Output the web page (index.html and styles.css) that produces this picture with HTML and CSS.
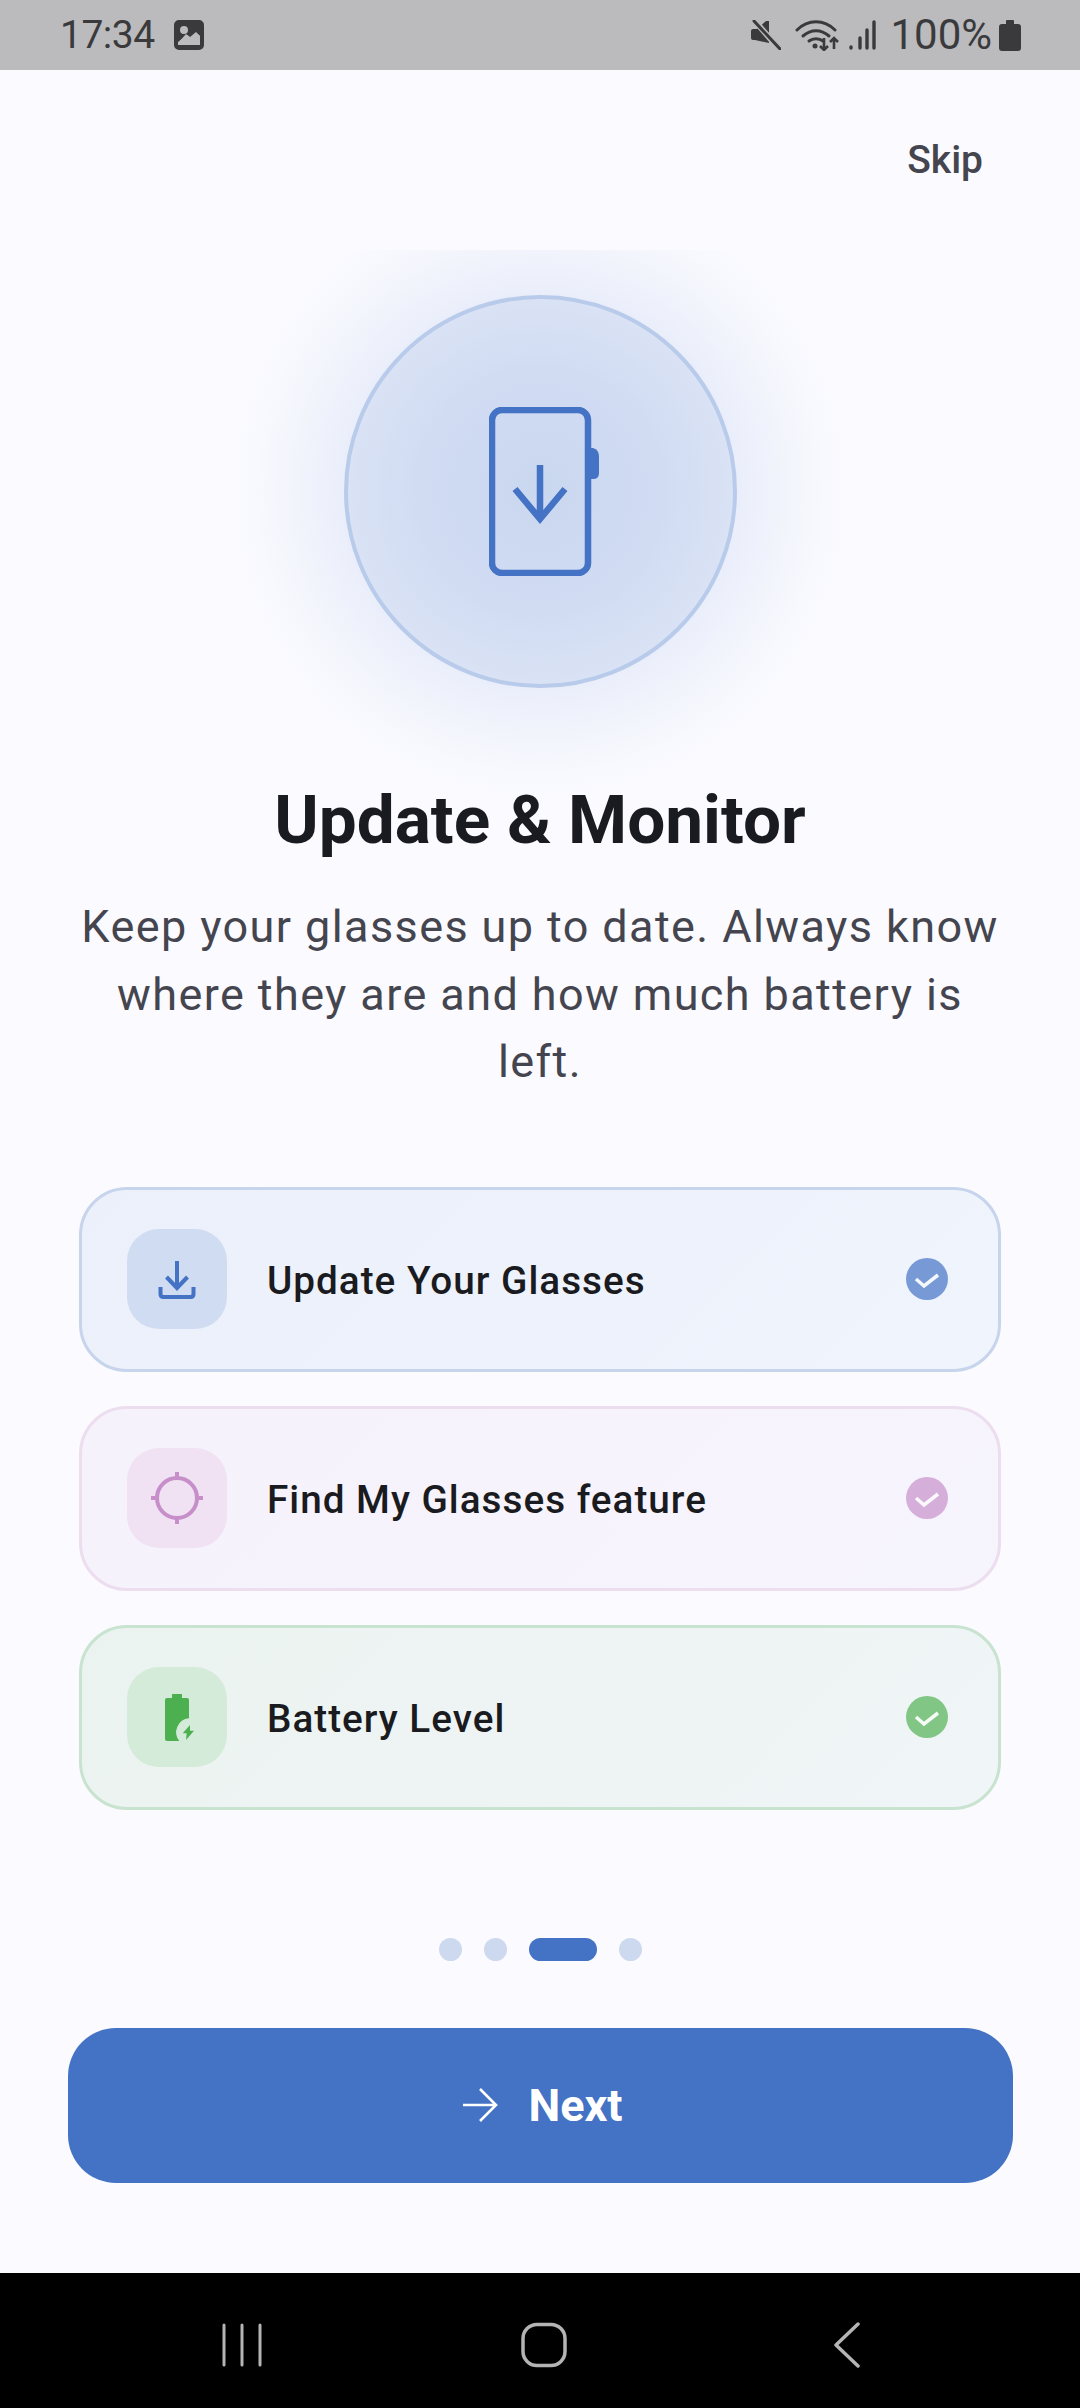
FILE: index.html
```html
<!DOCTYPE html>
<html lang="en">
<head>
<meta charset="utf-8">
<title>Update &amp; Monitor</title>
<link rel="stylesheet" href="styles.css">
</head>
<body>
<div class="screen">
  <header class="status">
    <div class="status-left">
      <span class="time">17:34</span>
      <svg class="ic-image" viewBox="0 0 30 30"><path fill="#3a3a3c" fill-rule="evenodd" d="M5 0h20a5 5 0 0 1 5 5v20a5 5 0 0 1-5 5H5a5 5 0 0 1-5-5V5a5 5 0 0 1 5-5zM4 22v3a1 1 0 0 0 1 1h20a1 1 0 0 0 1-1v-9l-4-3-5 5-4-3zM10 6a4 4 0 1 0 0 8 4 4 0 0 0 0-8z"/><path fill="#bbbabd" d="M4 23l8-9 4 3 6-5 4 4v7H4z"/><path fill="#3a3a3c" d="M4 25h22v2H4z"/></svg>
    </div>
    <div class="status-right">
      <svg class="ic-mute" viewBox="0 0 30 30"><path fill="#3a3a3c" d="M0 11q0-2 2-2h4l9-8h3v22L4 20H2q-2 0-2-2z"/><path stroke="#bbbabd" stroke-width="6" d="M3 0l26 30"/><path stroke="#3a3a3c" stroke-width="3" stroke-linecap="round" d="M3 1l26 28"/></svg>
      <svg class="ic-wifi" viewBox="0 0 46 32"><g fill="none" stroke="#3a3a3c" stroke-width="3" stroke-linecap="round"><path d="M2 11c11-11 27-11 38 0"/><path d="M8 17c8-7 18-7 26 0"/><path d="M14 22c4-3 10-3 14 0"/></g><circle cx="20" cy="27" r="2.5" fill="#3a3a3c"/><path fill="none" stroke="#3a3a3c" stroke-width="2.6" d="M29 19v12M25 27l4 4 4-4M39 30V19M35 23l4-4 4 4"/></svg>
      <svg class="ic-signal" viewBox="0 0 27 30"><path stroke="#3a3a3c" stroke-width="3.4" stroke-linecap="round" fill="none" d="M2 27v1M11 18v10M18 10v18M25 2v26"/></svg>
      <span class="pct">100%</span>
      <svg class="ic-batt" viewBox="0 0 22 31"><path fill="#3a3a3c" d="M7 1q0-1 1-1h6q1 0 1 1v3h4q3 0 3 3v21q0 3-3 3H3q-3 0-3-3V7q0-3 3-3h4z"/></svg>
    </div>
  </header>

  <main class="main">
    <div class="skip-row"><span class="skip">Skip</span></div>

    <section class="hero">
      <div class="circle">
        <svg class="phone" viewBox="0 0 110 169"><rect x="3" y="3" width="96" height="163" rx="10" fill="none" stroke="#4472c4" stroke-width="6.500"/><path fill="#4472c4" d="M101 41h3q6 2 6 8v17q0 6-6 6h-3z"/><path fill="none" stroke="#4472c4" stroke-width="6.500" d="M51 58v50M26 82l25 30 25-30"/></svg>
      </div>
    </section>

    <h1 class="title">Update &amp; Monitor</h1>
    <p class="desc">Keep your glasses up to date. Always know where they are and how much battery is left.</p>

    <ul class="cards">
      <li class="card card-blue">
        <span class="tile"><svg class="tile-ic" viewBox="0 0 100 100"><path fill="none" stroke="#4472c4" stroke-width="4" d="M50 32v27M39.500 48L50 59l10.500-11"/><path fill="none" stroke="#4472c4" stroke-width="4" d="M33.500 58v7q0 3 3 3h27q3 0 3-3v-7"/></svg></span>
        <span class="label">Update Your Glasses</span>
        <span class="check"><svg viewBox="0 0 42 42"><path fill="none" stroke="#fff" stroke-opacity=".92" stroke-width="3.500" d="M10 21l8 7 14-11"/></svg></span>
      </li>
      <li class="card card-pink">
        <span class="tile"><svg class="tile-ic" viewBox="0 0 100 100"><circle cx="50" cy="50" r="20" fill="none" stroke="#c68fca" stroke-width="4"/><path stroke="#c68fca" stroke-width="4" d="M50 24v6M50 70v6M24 50h6M70 50h6"/></svg></span>
        <span class="label">Find My Glasses feature</span>
        <span class="check"><svg viewBox="0 0 42 42"><path fill="none" stroke="#fff" stroke-opacity=".92" stroke-width="3.500" d="M10 21l8 7 14-11"/></svg></span>
      </li>
      <li class="card card-green">
        <span class="tile"><svg class="tile-ic" viewBox="0 0 100 100"><path fill="#4caf50" d="M38 33q0-2 2-2h5v-4h10v4h5q2 0 2 2v18.300A14 14 0 0 0 52.300 74H40q-2 0-2-2z"/><path fill="#4caf50" d="M63 58l-7.300 8.300h4L59 73l8-9.300h-4z"/></svg></span>
        <span class="label">Battery Level</span>
        <span class="check"><svg viewBox="0 0 42 42"><path fill="none" stroke="#fff" stroke-opacity=".92" stroke-width="3.500" d="M10 21l8 7 14-11"/></svg></span>
      </li>
    </ul>

    <div class="dots">
      <span class="dot"></span><span class="dot"></span><span class="dot dot-active"></span><span class="dot"></span>
    </div>

    <button class="next" type="button">
      <svg class="next-ic" viewBox="0 0 36 36"><path fill="none" stroke="#fff" stroke-width="2.600" d="M1 18h33M18 2l16 16-16 16"/></svg>
      <span>Next</span>
    </button>
  </main>

  <nav class="nav">
    <svg class="nav-recents" viewBox="0 0 42 44"><path stroke="#b4b4b4" stroke-width="3" stroke-linecap="round" d="M3 2v40M21 2v40M39 2v40"/></svg>
    <svg class="nav-home" viewBox="0 0 48 46"><rect x="3" y="2.500" width="42" height="41" rx="14" fill="none" stroke="#b4b4b4" stroke-width="3.500"/></svg>
    <svg class="nav-back" viewBox="0 0 28 46"><path fill="none" stroke="#b4b4b4" stroke-width="3.500" stroke-linecap="round" stroke-linejoin="round" d="M25 2L3 23l22 21"/></svg>
  </nav>
</div>
</body>
</html>
```

FILE: styles.css
```css
* { box-sizing: border-box; }
html, body { margin: 0; padding: 0; }
body { background: #fbfaff; font-family: Roboto, "Liberation Sans", sans-serif; }
svg { display: block; }

.screen { width: 1080px; height: 2408px; display: flex; flex-direction: column; overflow: hidden; }

/* Status bar */
.status { height: 70px; flex: none; background: #bbbabd; color: #3a3a3c; display: flex; align-items: center; justify-content: space-between; padding: 0 59px 0 60px; }
.status-left, .status-right { display: flex; align-items: center; }
.time { font-size: 39px; line-height: 70px; letter-spacing: -0.5px; }
.ic-image { width: 30px; height: 30px; margin-left: 19px; }
.ic-mute { width: 30px; height: 30px; }
.ic-wifi { width: 46px; height: 32px; margin-left: 14px; }
.ic-signal { width: 27px; height: 30px; margin-left: 8px; }
.pct { font-size: 42px; line-height: 70px; margin-left: 14px; }
.ic-batt { width: 22px; height: 31px; margin-left: 7px; }

/* Main */
.main { flex: 1; display: flex; flex-direction: column; align-items: center; min-height: 0; }
.skip-row { width: 100%; height: 180px; flex: none; display: flex; justify-content: flex-end; padding: 66px 97px 0 0; }
.skip { font-size: 39px; font-weight: 500; line-height: 48px; color: #44454e; }

.hero { position: relative; width: 660px; height: 482px; flex: none; display: flex; align-items: center; justify-content: center; }
.hero::before { content: ""; position: absolute; z-index: -1; left: 0; top: 0; width: 660px; height: 570px; background: radial-gradient(circle 325px at 50% 241px, #cfdaf2 0%, #dce4f6 50%, #ebeffb 62%, #f2f4fc 75%, #f8f9fe 88%, #fbfaff 100%); }
.circle { width: 393px; height: 393px; border-radius: 50%; border: 4px solid #b9cbea; display: flex; align-items: center; justify-content: center; background: radial-gradient(circle at 50% 50%, #c9d7ef 0%, #d1dcf3 45%, #dde5f5 80%, #e2e8f6 100%); }
.phone { width: 110px; height: 169px; margin-left: 8px; }

.title { margin: 46px 0 0; font-size: 67.500px; line-height: 84px; font-weight: 700; color: #1a1b20; text-align: center; }
.desc { margin: 31px 0 0; width: 940px; font-size: 45px; line-height: 67.500px; letter-spacing: 1.400px; color: #44454e; text-align: center; }

.cards { list-style: none; margin: 91px 0 0; padding: 0; display: flex; flex-direction: column; gap: 34px; }
.card { width: 922px; height: 185px; border-radius: 48px; border: 3px solid; display: flex; align-items: center; padding: 0 45px; }
.card-blue { border-color: #c6d4ec; background: linear-gradient(135deg, #ecf0fa, #f0f4fd); }
.card-pink { border-color: #ecdeef; background: linear-gradient(135deg, #f6f2fb, #f6f4fd); }
.card-green { border-color: #c8e3cf; background: linear-gradient(135deg, #ebf3f0, #f0f5f7); }
.tile { width: 100px; height: 100px; flex: none; border-radius: 32px; }
.tile-ic { width: 100px; height: 100px; }
.card-blue .tile { background: #d0dcf2; }
.card-pink .tile { background: #f0e2f2; }
.card-green .tile { background: #d5ebd9; }
.label { flex: 1; margin-left: 40px; padding-top: 2px; font-size: 38.700px; font-weight: 500; letter-spacing: 1px; color: #1a1b20; }
.check { width: 42px; height: 42px; flex: none; border-radius: 50%; margin-right: 5px; }
.check svg { width: 42px; height: 42px; }
.card-blue .check { background: #7799d6; }
.card-pink .check { background: #d5aeda; }
.card-green .check { background: #81c684; }

.dots { margin-top: 128px; display: flex; gap: 22px; }
.dot { width: 23px; height: 23px; border-radius: 12px; background: #cdd9ef; }
.dot-active { width: 68px; background: #4472c4; }

.next { margin-top: 67px; width: 945px; height: 155px; flex: none; border: 0; border-radius: 48px; background: #4472c4; color: #fff; font-family: inherit; font-size: 45px; font-weight: 700; display: flex; align-items: center; justify-content: center; gap: 30px; padding: 0 0 0 5px; }
.next-ic { width: 36px; height: 36px; }

/* Navigation bar */
.nav { height: 135px; flex: none; background: #000; display: flex; align-items: center; padding: 9px 0 0 221px; }
.nav-recents { width: 42px; height: 44px; }
.nav-home { width: 48px; height: 46px; margin-left: 257px; }
.nav-back { width: 28px; height: 46px; margin-left: 265px; }
```
